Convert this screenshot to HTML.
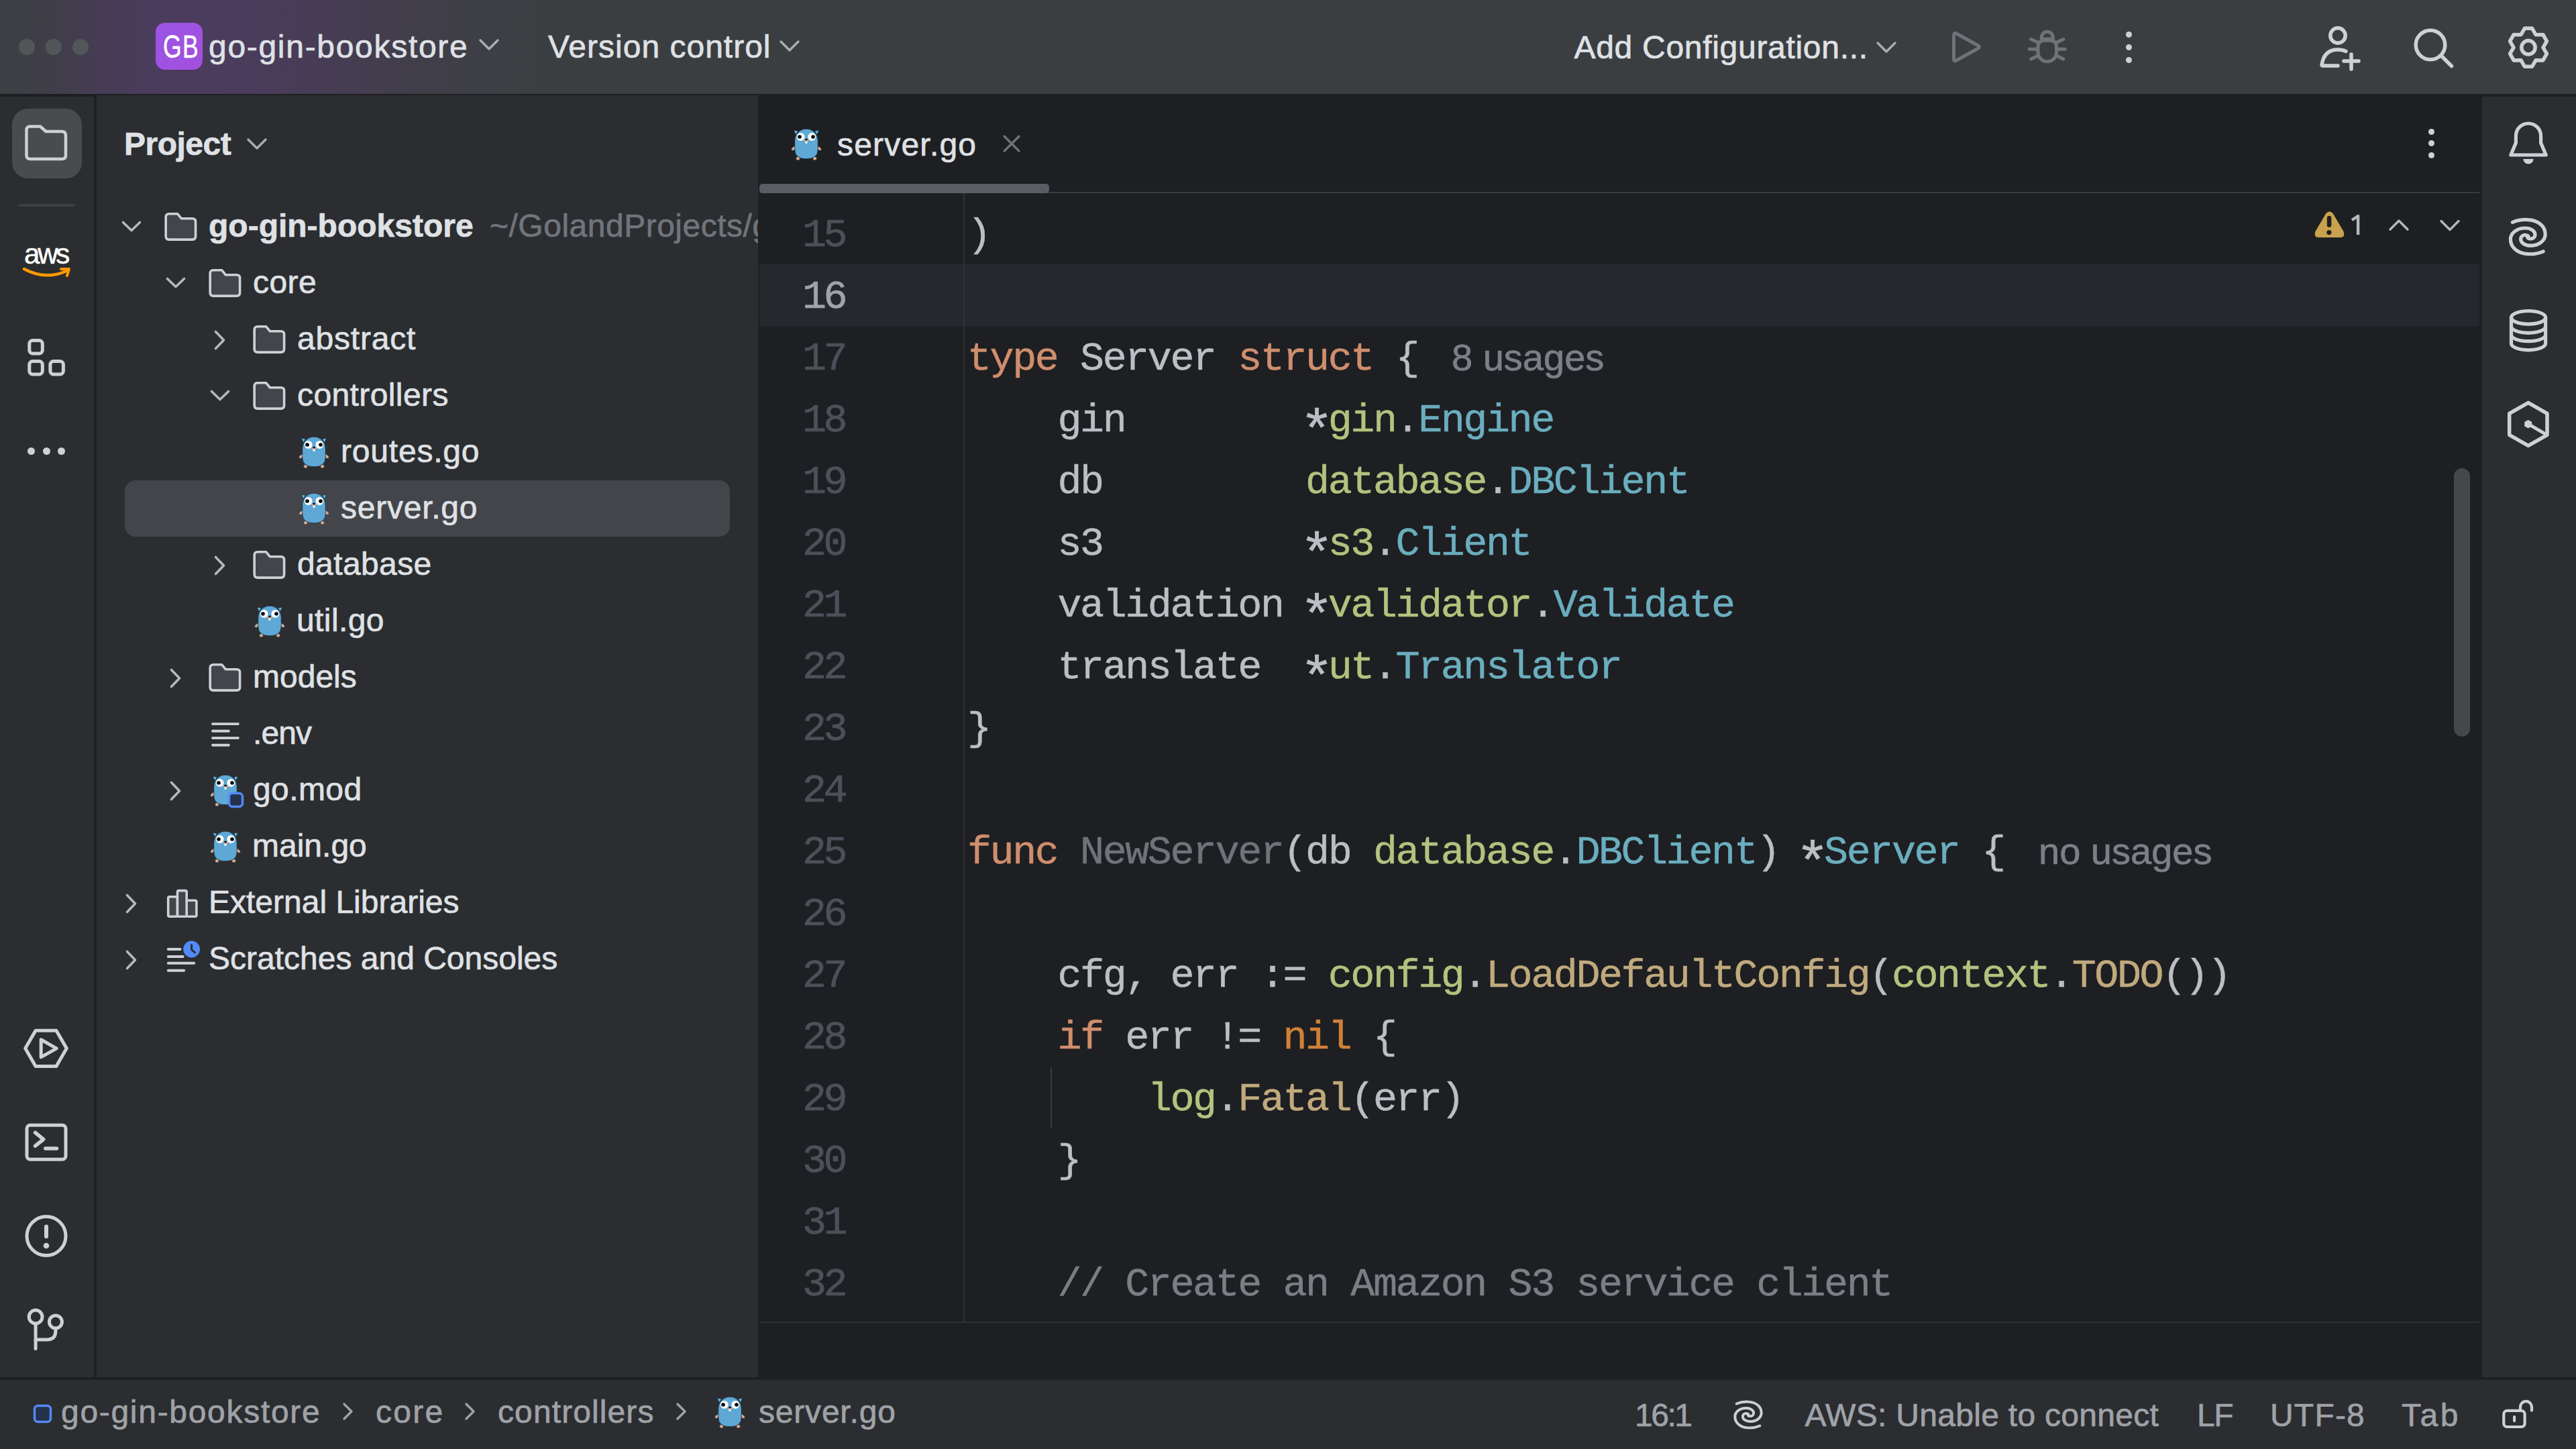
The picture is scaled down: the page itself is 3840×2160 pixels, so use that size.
<!DOCTYPE html>
<html><head><meta charset="utf-8"><title>GoLand</title>
<style>
html,body{margin:0;padding:0;}
body{width:3840px;height:2160px;overflow:hidden;position:relative;background:#1e1f22;font-family:"Liberation Sans",sans-serif;}
.t{position:absolute;white-space:pre;-webkit-text-stroke:0.7px currentColor;}
.ast{display:inline-block;width:33.6px;letter-spacing:0;text-align:center;transform:translate(-1.6px,19.4px) scale(1.4);}
svg{overflow:visible}
</style></head><body>
<svg width="0" height="0" style="position:absolute">
<defs>
<g id="gopher">
 <path d="M4.3 4.3 L10.5 5.2 L7.2 11 Z" fill="#6cb9e0" stroke="#1b3140" stroke-width="0.8" stroke-linejoin="round"/>
 <path d="M41.7 4.3 L35.5 5.2 L38.8 11 Z" fill="#6cb9e0" stroke="#1b3140" stroke-width="0.8" stroke-linejoin="round"/>
 <ellipse cx="4.6" cy="31" rx="4.6" ry="2.3" fill="#e0ae8c" stroke="#1b3140" stroke-width="0.6" transform="rotate(-38 4.6 31)"/>
 <ellipse cx="41.4" cy="31" rx="4.6" ry="2.3" fill="#e0ae8c" stroke="#1b3140" stroke-width="0.6" transform="rotate(38 41.4 31)"/>
 <ellipse cx="10.5" cy="46.2" rx="2.8" ry="2.6" fill="#e0ae8c" stroke="#1b3140" stroke-width="0.6"/>
 <ellipse cx="35.6" cy="46.2" rx="2.8" ry="2.6" fill="#e0ae8c" stroke="#1b3140" stroke-width="0.6"/>
 <path d="M5.8 19.4 A17.2 17.2 0 0 1 40.2 19.4 V33 Q40.2 46.8 23 46.8 Q5.8 46.8 5.8 33 Z" fill="#5fa8d6" stroke="#1b3140" stroke-width="0.8"/>
 <circle cx="14.7" cy="14" r="5.9" fill="#fff"/>
 <circle cx="31.3" cy="14" r="5.9" fill="#fff"/>
 <circle cx="13" cy="14" r="2.8" fill="#000"/>
 <circle cx="33" cy="14" r="2.8" fill="#000"/>
 <ellipse cx="23" cy="19.3" rx="3.3" ry="2.1" fill="#e0ae8c"/>
 <ellipse cx="23" cy="18.1" rx="1.8" ry="1.4" fill="#000"/>
 <rect x="21.4" y="21.1" width="3.2" height="2.6" fill="#fff"/>
</g>
<g id="folder">
 <path d="M2.2 7.5 Q2.2 2.7 7 2.7 H19.6 L25.5 9.8 H41.8 Q46.6 9.8 46.6 14.6 V36.3 Q46.6 41.1 41.8 41.1 H7 Q2.2 41.1 2.2 36.3 Z" fill="#43454a" stroke="#ced0d6" stroke-width="3.6" stroke-linejoin="round"/>
</g>
<g id="chev">
 <path d="M3.5 6.5 L16 18.5 L28.5 6.5" fill="none" stroke="#b4b8bf" stroke-width="3.6" stroke-linecap="round" stroke-linejoin="round"/>
</g>
</defs></svg>
<div style="position:absolute;left:0px;top:0px;width:3840px;height:140px;background:linear-gradient(90deg,#3d3f43 0px,#3f3e47 60px,#433d4f 120px,#483c58 180px,#4b3c5d 240px,#4b3c5d 330px,#493c59 420px,#453d51 520px,#413e4a 630px,#3d3f44 740px,#3b3e41 830px,#3b3e41 3840px);border-radius:0px;"></div>
<div style="position:absolute;left:28px;top:58px;width:24px;height:24px;background:#535659;border-radius:12px;"></div>
<div style="position:absolute;left:68px;top:58px;width:24px;height:24px;background:#535659;border-radius:12px;"></div>
<div style="position:absolute;left:108px;top:58px;width:24px;height:24px;background:#535659;border-radius:12px;"></div>
<div style="position:absolute;left:232px;top:34px;width:70px;height:70px;background:linear-gradient(135deg,#9a55e6,#a34fdc);border-radius:14px;"></div>
<div class="t" style="left:243.0px;top:21.9px;font-size:48px;line-height:96px;font-weight:400;color:#ffffff;letter-spacing:2px;font-family:'Liberation Sans';transform:scaleX(0.74);transform-origin:0 0;-webkit-text-stroke:0.6px #fff;">GB</div>
<div class="t" style="left:311.0px;top:22.4px;font-size:48px;line-height:96px;font-weight:400;color:#dfe1e5;letter-spacing:1.7px;font-family:'Liberation Sans';">go-gin-bookstore</div>
<svg style="position:absolute;left:712px;top:56px;" width="34" height="24" viewBox="0 0 34 24"><path d="M4 4 L17 17 L30 4" fill="none" stroke="#a9acb2" stroke-width="3.4" stroke-linecap="round" stroke-linejoin="round"/></svg>
<div class="t" style="left:817.0px;top:22.4px;font-size:48px;line-height:96px;font-weight:400;color:#dfe1e5;letter-spacing:1.0px;font-family:'Liberation Sans';">Version control</div>
<svg style="position:absolute;left:1160px;top:57.5px;" width="34" height="24" viewBox="0 0 34 24"><path d="M4 4 L17 17 L30 4" fill="none" stroke="#a9acb2" stroke-width="3.4" stroke-linecap="round" stroke-linejoin="round"/></svg>
<div class="t" style="left:2346.5px;top:23.4px;font-size:48px;line-height:96px;font-weight:400;color:#dfe1e5;letter-spacing:0.7px;font-family:'Liberation Sans';">Add Configuration...</div>
<svg style="position:absolute;left:2795px;top:60px;" width="34" height="24" viewBox="0 0 34 24"><path d="M4 4 L17 17 L30 4" fill="none" stroke="#a9acb2" stroke-width="3.4" stroke-linecap="round" stroke-linejoin="round"/></svg>
<svg style="position:absolute;left:2905px;top:40px;" width="54" height="58" viewBox="0 0 54 58"><path d="M7.5 12.5 Q7.5 7.8 11.5 10 L43.5 27.8 Q47.5 30 43.5 32.2 L11.5 50 Q7.5 52.2 7.5 47.5 Z" fill="none" stroke="#6f7378" stroke-width="5" stroke-linejoin="round"/></svg>
<svg style="position:absolute;left:3020px;top:40px;" width="64" height="58" viewBox="0 0 64 58"><g fill="none" stroke="#6f7378" stroke-width="5" stroke-linecap="round" stroke-linejoin="round"><path d="M23.3 18.2 V15.7 A8.5 8.5 0 0 1 40.3 15.7 V18.2 Z"/><path d="M18 30 Q18 20.2 28 20.2 H35.5 Q45.5 20.2 45.5 30 V38 A13.75 13.75 0 0 1 18 38 Z"/><path d="M7.7 18.5 L18.3 23.4 M5.3 33.2 H15.9 M7.7 47.9 L18.3 43 M55.8 18.5 L45.2 23.4 M58.2 33.2 H47.6 M55.8 47.9 L45.2 43"/></g></svg>
<div style="position:absolute;left:3169px;top:46.5px;width:9px;height:9px;background:#ced0d6;border-radius:5px;"></div>
<div style="position:absolute;left:3169px;top:66.0px;width:9px;height:9px;background:#ced0d6;border-radius:5px;"></div>
<div style="position:absolute;left:3169px;top:84.5px;width:9px;height:9px;background:#ced0d6;border-radius:5px;"></div>
<svg style="position:absolute;left:3455px;top:36px;" width="60" height="70" viewBox="0 0 60 70"><g fill="none" stroke="#ced0d6" stroke-width="5.5" stroke-linecap="round"><circle cx="30" cy="17" r="11.2"/><path d="M30 62 H7.5 Q5.5 62 6.2 59.5 Q10 38 30 38 Q37 38 42 40.5"/><path d="M50 45 V67 M39 55 H61"/></g></svg>
<svg style="position:absolute;left:3590px;top:36px;" width="72" height="72" viewBox="0 0 72 72"><g fill="none" stroke="#ced0d6" stroke-width="5.5" stroke-linecap="round"><circle cx="33" cy="31" r="21.8"/><path d="M49 47 L64.5 62.5"/></g></svg>
<svg style="position:absolute;left:3729px;top:31px;" width="80" height="80" viewBox="0 0 80 80"><g fill="none" stroke="#ced0d6" stroke-width="5.5" stroke-linejoin="round"><path d="M34.40 11.35 L45.60 11.35 L51.00 20.75 L61.84 20.72 L67.44 30.42 L62.00 39.80 L67.44 49.18 L61.84 58.88 L51.00 58.85 L45.60 68.25 L34.40 68.25 L29.00 58.85 L18.16 58.88 L12.56 49.18 L18.00 39.80 L12.56 30.42 L18.16 20.72 L29.00 20.75 Z"/><circle cx="40" cy="39.8" r="10.2"/></g></svg>
<div style="position:absolute;left:0px;top:144px;width:140px;height:1909px;background:#2b2d30;border-radius:0px;"></div>
<div style="position:absolute;left:18px;top:162px;width:104px;height:104px;background:#4a4b4e;border-radius:24px;"></div>
<svg style="position:absolute;left:34px;top:183px;" width="70" height="60" viewBox="0 0 70 60"><path d="M5.5 11 Q5.5 5.5 11 5.5 H26 L34.5 13 H58 Q64 13 64 19 V48.5 Q64 54 58.5 54 H11 Q5.5 54 5.5 48.5 Z" fill="none" stroke="#ced0d6" stroke-width="4.5" stroke-linejoin="round"/></svg>
<div style="position:absolute;left:28px;top:304px;width:84px;height:4px;background:#3e4043;border-radius:2px;"></div>
<div class="t" style="left:36.0px;top:336.9px;font-size:42px;line-height:84px;font-weight:400;color:#ffffff;letter-spacing:-3.2px;font-family:'Liberation Sans';-webkit-text-stroke:0.5px #fff;">aws</div>
<svg style="position:absolute;left:33px;top:396px;" width="76" height="22" viewBox="0 0 76 22"><path d="M3 5 Q35 22 66 8" fill="none" stroke="#ff9900" stroke-width="4.5" stroke-linecap="round"/><path d="M58 5 L70 5 L67 15" fill="none" stroke="#ff9900" stroke-width="4" stroke-linecap="round" stroke-linejoin="round"/></svg>
<svg style="position:absolute;left:38px;top:502px;" width="62" height="62" viewBox="0 0 62 62"><g fill="none" stroke="#ced0d6" stroke-width="5"><rect x="5.8" y="5.5" width="19.5" height="19.5" rx="5"/><rect x="5.8" y="36.5" width="19.5" height="19.5" rx="5"/><rect x="36.9" y="36.5" width="19.5" height="19.5" rx="5"/></g></svg>
<div style="position:absolute;left:40.5px;top:667px;width:11px;height:11px;background:#ced0d6;border-radius:6px;"></div>
<div style="position:absolute;left:63.5px;top:667px;width:11px;height:11px;background:#ced0d6;border-radius:6px;"></div>
<div style="position:absolute;left:86.1px;top:667px;width:11px;height:11px;background:#ced0d6;border-radius:6px;"></div>
<svg style="position:absolute;left:33px;top:1530px;" width="72" height="66" viewBox="0 0 72 66"><g fill="none" stroke="#ced0d6" stroke-width="5" stroke-linejoin="round"><path d="M20.1 6.2 H50.9 L66.3 32.85 L50.9 59.5 H20.1 L4.7 32.85 Z"/><path d="M28.2 19.8 L51.3 32.85 L28.2 45.9 Z"/></g></svg>
<svg style="position:absolute;left:34px;top:1673px;" width="70" height="62" viewBox="0 0 70 62"><g fill="none" stroke="#ced0d6" stroke-width="5" stroke-linecap="round" stroke-linejoin="round"><rect x="6" y="4.3" width="58" height="51" rx="5"/><path d="M18.6 15.4 L30.8 25.3 L18.6 35.2" stroke-width="5.5"/><path d="M33.8 39 H50.5" stroke-width="5.5"/></g></svg>
<svg style="position:absolute;left:34px;top:1808px;" width="70" height="70" viewBox="0 0 70 70"><g fill="none" stroke="#ced0d6" stroke-width="5" stroke-linecap="round"><circle cx="35" cy="34.5" r="29"/><path d="M35 20.6 V35.3" stroke-width="6"/></g><circle cx="35" cy="49" r="4.3" fill="#ced0d6"/></svg>
<svg style="position:absolute;left:36px;top:1948px;" width="64" height="70" viewBox="0 0 64 70"><g fill="none" stroke="#ced0d6" stroke-width="5" stroke-linecap="round"><circle cx="17.1" cy="15" r="9.9"/><circle cx="46.9" cy="22.5" r="9.5"/><path d="M17.1 24.9 V62.5"/><path d="M17.1 49 H34 Q46.9 49 46.9 36 V32"/></g></svg>
<div style="position:absolute;left:144px;top:142px;width:986px;height:1911px;background:#2b2d30;border-radius:0px;"></div>
<div class="t" style="left:185.0px;top:167.4px;font-size:48px;line-height:96px;font-weight:700;color:#dfe1e5;letter-spacing:-0.5px;font-family:'Liberation Sans';">Project</div>
<svg style="position:absolute;left:366px;top:204px;" width="36" height="24" viewBox="0 0 36 24"><path d="M4 4 L17 17 L30 4" fill="none" stroke="#a9acb2" stroke-width="3.4" stroke-linecap="round" stroke-linejoin="round"/></svg>
<div style="position:absolute;left:186px;top:716px;width:902px;height:84px;background:#43454a;border-radius:16px;"></div>
<svg style="position:absolute;left:180px;top:325px;" width="32" height="25" viewBox="0 0 32 25"><use href="#chev"/></svg>
<svg style="position:absolute;left:245px;top:316px;" width="49" height="44" viewBox="0 0 49 44"><use href="#folder"/></svg>
<div class="t" style="left:311.0px;top:289.4px;font-size:48px;line-height:96px;font-weight:700;color:#dfe1e5;letter-spacing:0px;font-family:'Liberation Sans';">go-gin-bookstore</div>
<div class="t" style="left:730.0px;top:289.4px;font-size:48px;line-height:96px;font-weight:400;color:#70747b;letter-spacing:0.5px;font-family:'Liberation Sans';">~/GolandProjects/go-gin-bookstore</div>
<svg style="position:absolute;left:246px;top:409px;" width="32" height="25" viewBox="0 0 32 25"><use href="#chev"/></svg>
<svg style="position:absolute;left:311px;top:400px;" width="49" height="44" viewBox="0 0 49 44"><use href="#folder"/></svg>
<div class="t" style="left:377.0px;top:373.4px;font-size:48px;line-height:96px;font-weight:400;color:#dfe1e5;letter-spacing:0.4px;font-family:'Liberation Sans';">core</div>
<svg style="position:absolute;left:315px;top:498px;" width="25" height="32" viewBox="0 0 25 32"><g transform="rotate(-90 12.5 12.5)"><use href="#chev"/></g></svg>
<svg style="position:absolute;left:377px;top:484px;" width="49" height="44" viewBox="0 0 49 44"><use href="#folder"/></svg>
<div class="t" style="left:443.0px;top:457.4px;font-size:48px;line-height:96px;font-weight:400;color:#dfe1e5;letter-spacing:0.8px;font-family:'Liberation Sans';">abstract</div>
<svg style="position:absolute;left:312px;top:577px;" width="32" height="25" viewBox="0 0 32 25"><use href="#chev"/></svg>
<svg style="position:absolute;left:377px;top:568px;" width="49" height="44" viewBox="0 0 49 44"><use href="#folder"/></svg>
<div class="t" style="left:443.0px;top:541.4px;font-size:48px;line-height:96px;font-weight:400;color:#dfe1e5;letter-spacing:0.4px;font-family:'Liberation Sans';">controllers</div>
<svg style="position:absolute;left:445px;top:649px;" width="47" height="51" viewBox="0 0 47 51"><g transform="scale(1.0)"><use href="#gopher"/></g></svg>
<div class="t" style="left:508.0px;top:625.4px;font-size:48px;line-height:96px;font-weight:400;color:#dfe1e5;letter-spacing:0.8px;font-family:'Liberation Sans';">routes.go</div>
<svg style="position:absolute;left:445px;top:733px;" width="47" height="51" viewBox="0 0 47 51"><g transform="scale(1.0)"><use href="#gopher"/></g></svg>
<div class="t" style="left:508.0px;top:709.4px;font-size:48px;line-height:96px;font-weight:400;color:#dfe1e5;letter-spacing:0.75px;font-family:'Liberation Sans';">server.go</div>
<svg style="position:absolute;left:315px;top:834px;" width="25" height="32" viewBox="0 0 25 32"><g transform="rotate(-90 12.5 12.5)"><use href="#chev"/></g></svg>
<svg style="position:absolute;left:377px;top:820px;" width="49" height="44" viewBox="0 0 49 44"><use href="#folder"/></svg>
<div class="t" style="left:443.0px;top:793.4px;font-size:48px;line-height:96px;font-weight:400;color:#dfe1e5;letter-spacing:0.4px;font-family:'Liberation Sans';">database</div>
<svg style="position:absolute;left:379px;top:901px;" width="47" height="51" viewBox="0 0 47 51"><g transform="scale(1.0)"><use href="#gopher"/></g></svg>
<div class="t" style="left:442.0px;top:877.4px;font-size:48px;line-height:96px;font-weight:400;color:#dfe1e5;letter-spacing:0.4px;font-family:'Liberation Sans';">util.go</div>
<svg style="position:absolute;left:249px;top:1002px;" width="25" height="32" viewBox="0 0 25 32"><g transform="rotate(-90 12.5 12.5)"><use href="#chev"/></g></svg>
<svg style="position:absolute;left:311px;top:988px;" width="49" height="44" viewBox="0 0 49 44"><use href="#folder"/></svg>
<div class="t" style="left:377.0px;top:961.4px;font-size:48px;line-height:96px;font-weight:400;color:#dfe1e5;letter-spacing:0.0px;font-family:'Liberation Sans';">models</div>
<svg style="position:absolute;left:311px;top:1072px;" width="50" height="44" viewBox="0 0 50 44"><g stroke="#ced0d6" stroke-width="3.9" stroke-linecap="round"><path d="M6 7.1 H43.9 M6 17.7 H29.9 M6 28.1 H43.9 M6 38.8 H29.9"/></g></svg>
<div class="t" style="left:377.0px;top:1045.4px;font-size:48px;line-height:96px;font-weight:400;color:#dfe1e5;letter-spacing:-0.9px;font-family:'Liberation Sans';">.env</div>
<svg style="position:absolute;left:249px;top:1170px;" width="25" height="32" viewBox="0 0 25 32"><g transform="rotate(-90 12.5 12.5)"><use href="#chev"/></g></svg>
<svg style="position:absolute;left:313px;top:1153px;" width="47" height="51" viewBox="0 0 47 51"><g transform="scale(1.0)"><use href="#gopher"/></g></svg>
<svg style="position:absolute;left:339px;top:1180px;" width="26" height="26" viewBox="0 0 26 26"><rect x="2.5" y="2.5" width="20" height="20" rx="5" fill="#25324d" stroke="#548af7" stroke-width="3.5"/></svg>
<div class="t" style="left:377.0px;top:1129.4px;font-size:48px;line-height:96px;font-weight:400;color:#dfe1e5;letter-spacing:0.4px;font-family:'Liberation Sans';">go.mod</div>
<svg style="position:absolute;left:313px;top:1237px;" width="47" height="51" viewBox="0 0 47 51"><g transform="scale(1.0)"><use href="#gopher"/></g></svg>
<div class="t" style="left:376.0px;top:1213.4px;font-size:48px;line-height:96px;font-weight:400;color:#dfe1e5;letter-spacing:0.0px;font-family:'Liberation Sans';">main.go</div>
<svg style="position:absolute;left:183px;top:1338px;" width="25" height="32" viewBox="0 0 25 32"><g transform="rotate(-90 12.5 12.5)"><use href="#chev"/></g></svg>
<svg style="position:absolute;left:245px;top:1322px;" width="50" height="48" viewBox="0 0 50 48"><g fill="#43454a" stroke="#ced0d6" stroke-width="3.6" stroke-linejoin="round"><rect x="5.7" y="14.8" width="13.8" height="29.4" rx="2"/><rect x="33.2" y="20.3" width="14.7" height="23.9" rx="2"/><rect x="19.5" y="5.6" width="13.7" height="38.6" rx="2"/></g></svg>
<div class="t" style="left:311.0px;top:1297.4px;font-size:48px;line-height:96px;font-weight:400;color:#dfe1e5;letter-spacing:0.0px;font-family:'Liberation Sans';">External Libraries</div>
<svg style="position:absolute;left:183px;top:1422px;" width="25" height="32" viewBox="0 0 25 32"><g transform="rotate(-90 12.5 12.5)"><use href="#chev"/></g></svg>
<svg style="position:absolute;left:245px;top:1404px;" width="56" height="52" viewBox="0 0 56 52"><g stroke="#ced0d6" stroke-width="3.9" stroke-linecap="round"><path d="M5.8 11 H23.6 M5.8 22 H27.7 M5.8 31.7 H44.2 M5.8 42.7 H29.2"/></g><circle cx="40.6" cy="11" r="12.4" fill="#548af7"/><path d="M40.6 4.5 V11.5 L45.5 16" fill="none" stroke="#2b2d30" stroke-width="3" stroke-linecap="round"/></svg>
<div class="t" style="left:311.0px;top:1381.4px;font-size:48px;line-height:96px;font-weight:400;color:#dfe1e5;letter-spacing:0.0px;font-family:'Liberation Sans';">Scratches and Consoles</div>
<div style="position:absolute;left:1130px;top:142px;width:2567px;height:1911px;background:#1e1f22;border-radius:0px;"></div>
<svg style="position:absolute;left:1179px;top:190px;" width="47" height="51" viewBox="0 0 47 51"><g transform="scale(1.0)"><use href="#gopher"/></g></svg>
<div class="t" style="left:1248.0px;top:167.9px;font-size:48px;line-height:96px;font-weight:400;color:#dfe1e5;letter-spacing:1.2px;font-family:'Liberation Sans';">server.go</div>
<svg style="position:absolute;left:1490px;top:196px;" width="36" height="36" viewBox="0 0 36 36"><path d="M7.2 7.3 L29 29.1 M29 7.3 L7.2 29.1" stroke="#70747a" stroke-width="3.4" stroke-linecap="round"/></svg>
<div style="position:absolute;left:1132px;top:286px;width:2564px;height:2px;background:#393b40;border-radius:0px;"></div>
<div style="position:absolute;left:1132px;top:274px;width:432px;height:14px;background:#5a5d63;border-radius:5px;"></div>
<div style="position:absolute;left:3619.5px;top:191.8px;width:9px;height:9px;background:#ced0d6;border-radius:5px;"></div>
<div style="position:absolute;left:3619.5px;top:209.4px;width:9px;height:9px;background:#ced0d6;border-radius:5px;"></div>
<div style="position:absolute;left:3619.5px;top:227.0px;width:9px;height:9px;background:#ced0d6;border-radius:5px;"></div>
<div style="position:absolute;left:1132px;top:394px;width:2564px;height:92px;background:#26282e;border-radius:0px;"></div>
<div style="position:absolute;left:1436px;top:288px;width:2px;height:1683px;background:#2f3135;border-radius:0px;"></div>
<div style="position:absolute;left:1132px;top:1970px;width:2564px;height:2px;background:#2e3034;border-radius:0px;"></div>
<svg style="position:absolute;left:3448px;top:312px;" width="50" height="46" viewBox="0 0 50 46"><path d="M24.5 3.5 Q28 3.5 30.5 7.5 L45.5 33 Q48.5 42 40 42 H9 Q0.5 42 3.5 33 L18.5 7.5 Q21 3.5 24.5 3.5 Z" fill="#c9a24d"/><path d="M24.1 13 V23.6" stroke="#1e1f22" stroke-width="6.5" stroke-linecap="round"/><circle cx="23.9" cy="34.5" r="3.6" fill="#1e1f22"/></svg>
<svg style="position:absolute;left:3500px;top:318px;" width="24" height="36" viewBox="0 0 24 36"><path d="M6 10 L15.1 4 V32" fill="none" stroke="#b4b8bf" stroke-width="4.4" stroke-linejoin="round"/></svg>
<svg style="position:absolute;left:3558px;top:322px;" width="36" height="28" viewBox="0 0 36 28"><path d="M5 20 L18 7 L31 20" fill="none" stroke="#b4b8bf" stroke-width="3.4" stroke-linecap="round" stroke-linejoin="round"/></svg>
<svg style="position:absolute;left:3634px;top:322px;" width="36" height="28" viewBox="0 0 36 28"><path d="M5 7.5 L18 20.5 L31 7.5" fill="none" stroke="#b4b8bf" stroke-width="3.4" stroke-linecap="round" stroke-linejoin="round"/></svg>
<div style="position:absolute;left:3658px;top:698px;width:24px;height:400px;background:#46474a;border-radius:12px;"></div>
<div class="t" style="left:1196.0px;top:291.0px;font-size:60px;line-height:120px;font-weight:400;color:#4b5059;letter-spacing:-4.6px;font-family:'Liberation Mono';">15</div>
<div class="t" style="left:1442px;top:305.0px;font-family:'Liberation Mono';font-size:60px;line-height:92px;letter-spacing:-2.40px;color:#bcbec4;-webkit-text-stroke:0.5px currentColor"><span style="color:#bcbec4">)</span></div>
<div class="t" style="left:1196.0px;top:383.0px;font-size:60px;line-height:120px;font-weight:400;color:#a1a3ab;letter-spacing:-4.6px;font-family:'Liberation Mono';">16</div>
<div class="t" style="left:1196.0px;top:475.0px;font-size:60px;line-height:120px;font-weight:400;color:#4b5059;letter-spacing:-4.6px;font-family:'Liberation Mono';">17</div>
<div class="t" style="left:1442px;top:489.0px;font-family:'Liberation Mono';font-size:60px;line-height:92px;letter-spacing:-2.40px;color:#bcbec4;-webkit-text-stroke:0.5px currentColor"><span style="color:#cf8e6d">type</span><span style="color:#bcbec4"> Server </span><span style="color:#cf8e6d">struct</span><span style="color:#bcbec4"> {</span></div>
<div class="t" style="left:1196.0px;top:567.0px;font-size:60px;line-height:120px;font-weight:400;color:#4b5059;letter-spacing:-4.6px;font-family:'Liberation Mono';">18</div>
<div class="t" style="left:1442px;top:581.0px;font-family:'Liberation Mono';font-size:60px;line-height:92px;letter-spacing:-2.40px;color:#bcbec4;-webkit-text-stroke:0.5px currentColor"><span style="color:#bcbec4">    gin        <span class="ast">*</span></span><span style="color:#b3c27e">gin</span><span style="color:#bcbec4">.</span><span style="color:#6aaebf">Engine</span></div>
<div class="t" style="left:1196.0px;top:659.0px;font-size:60px;line-height:120px;font-weight:400;color:#4b5059;letter-spacing:-4.6px;font-family:'Liberation Mono';">19</div>
<div class="t" style="left:1442px;top:673.0px;font-family:'Liberation Mono';font-size:60px;line-height:92px;letter-spacing:-2.40px;color:#bcbec4;-webkit-text-stroke:0.5px currentColor"><span style="color:#bcbec4">    db         </span><span style="color:#b3c27e">database</span><span style="color:#bcbec4">.</span><span style="color:#6aaebf">DBClient</span></div>
<div class="t" style="left:1196.0px;top:751.0px;font-size:60px;line-height:120px;font-weight:400;color:#4b5059;letter-spacing:-4.6px;font-family:'Liberation Mono';">20</div>
<div class="t" style="left:1442px;top:765.0px;font-family:'Liberation Mono';font-size:60px;line-height:92px;letter-spacing:-2.40px;color:#bcbec4;-webkit-text-stroke:0.5px currentColor"><span style="color:#bcbec4">    s3         <span class="ast">*</span></span><span style="color:#b3c27e">s3</span><span style="color:#bcbec4">.</span><span style="color:#6aaebf">Client</span></div>
<div class="t" style="left:1196.0px;top:843.0px;font-size:60px;line-height:120px;font-weight:400;color:#4b5059;letter-spacing:-4.6px;font-family:'Liberation Mono';">21</div>
<div class="t" style="left:1442px;top:857.0px;font-family:'Liberation Mono';font-size:60px;line-height:92px;letter-spacing:-2.40px;color:#bcbec4;-webkit-text-stroke:0.5px currentColor"><span style="color:#bcbec4">    validation <span class="ast">*</span></span><span style="color:#b3c27e">validator</span><span style="color:#bcbec4">.</span><span style="color:#6aaebf">Validate</span></div>
<div class="t" style="left:1196.0px;top:935.0px;font-size:60px;line-height:120px;font-weight:400;color:#4b5059;letter-spacing:-4.6px;font-family:'Liberation Mono';">22</div>
<div class="t" style="left:1442px;top:949.0px;font-family:'Liberation Mono';font-size:60px;line-height:92px;letter-spacing:-2.40px;color:#bcbec4;-webkit-text-stroke:0.5px currentColor"><span style="color:#bcbec4">    translate  <span class="ast">*</span></span><span style="color:#b3c27e">ut</span><span style="color:#bcbec4">.</span><span style="color:#6aaebf">Translator</span></div>
<div class="t" style="left:1196.0px;top:1027.0px;font-size:60px;line-height:120px;font-weight:400;color:#4b5059;letter-spacing:-4.6px;font-family:'Liberation Mono';">23</div>
<div class="t" style="left:1442px;top:1041.0px;font-family:'Liberation Mono';font-size:60px;line-height:92px;letter-spacing:-2.40px;color:#bcbec4;-webkit-text-stroke:0.5px currentColor"><span style="color:#bcbec4">}</span></div>
<div class="t" style="left:1196.0px;top:1119.0px;font-size:60px;line-height:120px;font-weight:400;color:#4b5059;letter-spacing:-4.6px;font-family:'Liberation Mono';">24</div>
<div class="t" style="left:1196.0px;top:1211.0px;font-size:60px;line-height:120px;font-weight:400;color:#4b5059;letter-spacing:-4.6px;font-family:'Liberation Mono';">25</div>
<div class="t" style="left:1442px;top:1225.0px;font-family:'Liberation Mono';font-size:60px;line-height:92px;letter-spacing:-2.40px;color:#bcbec4;-webkit-text-stroke:0.5px currentColor"><span style="color:#cf8e6d">func</span><span style="color:#bcbec4"> </span><span style="color:#6f737a">NewServer</span><span style="color:#bcbec4">(db </span><span style="color:#b3c27e">database</span><span style="color:#bcbec4">.</span><span style="color:#6aaebf">DBClient</span><span style="color:#bcbec4">) <span class="ast">*</span></span><span style="color:#6aaebf">Server</span><span style="color:#bcbec4"> {</span></div>
<div class="t" style="left:1196.0px;top:1303.0px;font-size:60px;line-height:120px;font-weight:400;color:#4b5059;letter-spacing:-4.6px;font-family:'Liberation Mono';">26</div>
<div class="t" style="left:1196.0px;top:1395.0px;font-size:60px;line-height:120px;font-weight:400;color:#4b5059;letter-spacing:-4.6px;font-family:'Liberation Mono';">27</div>
<div class="t" style="left:1442px;top:1409.0px;font-family:'Liberation Mono';font-size:60px;line-height:92px;letter-spacing:-2.40px;color:#bcbec4;-webkit-text-stroke:0.5px currentColor"><span style="color:#bcbec4">    cfg, err := </span><span style="color:#b3c27e">config</span><span style="color:#bcbec4">.</span><span style="color:#c0aa7d">LoadDefaultConfig</span><span style="color:#bcbec4">(</span><span style="color:#b3c27e">context</span><span style="color:#bcbec4">.</span><span style="color:#c0aa7d">TODO</span><span style="color:#bcbec4">())</span></div>
<div class="t" style="left:1196.0px;top:1487.0px;font-size:60px;line-height:120px;font-weight:400;color:#4b5059;letter-spacing:-4.6px;font-family:'Liberation Mono';">28</div>
<div class="t" style="left:1442px;top:1501.0px;font-family:'Liberation Mono';font-size:60px;line-height:92px;letter-spacing:-2.40px;color:#bcbec4;-webkit-text-stroke:0.5px currentColor"><span style="color:#bcbec4">    </span><span style="color:#cf8e6d">if</span><span style="color:#bcbec4"> err != </span><span style="color:#cf8138">nil</span><span style="color:#bcbec4"> {</span></div>
<div class="t" style="left:1196.0px;top:1579.0px;font-size:60px;line-height:120px;font-weight:400;color:#4b5059;letter-spacing:-4.6px;font-family:'Liberation Mono';">29</div>
<div class="t" style="left:1442px;top:1593.0px;font-family:'Liberation Mono';font-size:60px;line-height:92px;letter-spacing:-2.40px;color:#bcbec4;-webkit-text-stroke:0.5px currentColor"><span style="color:#bcbec4">        </span><span style="color:#b3c27e">log</span><span style="color:#bcbec4">.</span><span style="color:#c0aa7d">Fatal</span><span style="color:#bcbec4">(err)</span></div>
<div class="t" style="left:1196.0px;top:1671.0px;font-size:60px;line-height:120px;font-weight:400;color:#4b5059;letter-spacing:-4.6px;font-family:'Liberation Mono';">30</div>
<div class="t" style="left:1442px;top:1685.0px;font-family:'Liberation Mono';font-size:60px;line-height:92px;letter-spacing:-2.40px;color:#bcbec4;-webkit-text-stroke:0.5px currentColor"><span style="color:#bcbec4">    }</span></div>
<div class="t" style="left:1196.0px;top:1763.0px;font-size:60px;line-height:120px;font-weight:400;color:#4b5059;letter-spacing:-4.6px;font-family:'Liberation Mono';">31</div>
<div class="t" style="left:1196.0px;top:1855.0px;font-size:60px;line-height:120px;font-weight:400;color:#4b5059;letter-spacing:-4.6px;font-family:'Liberation Mono';">32</div>
<div class="t" style="left:1442px;top:1869.0px;font-family:'Liberation Mono';font-size:60px;line-height:92px;letter-spacing:-2.40px;color:#bcbec4;-webkit-text-stroke:0.5px currentColor"><span style="color:#bcbec4">    </span><span style="color:#7a7e85">// Create an Amazon S3 service client</span></div>
<div class="t" style="left:2164.0px;top:476.6px;font-size:56px;line-height:112px;font-weight:400;color:#7b7f87;letter-spacing:0px;font-family:'Liberation Sans';">8 usages</div>
<div class="t" style="left:3039.0px;top:1213.1px;font-size:56px;line-height:112px;font-weight:400;color:#7b7f87;letter-spacing:0px;font-family:'Liberation Sans';">no usages</div>
<div style="position:absolute;left:1566px;top:1591px;width:2px;height:90px;background:#393b40;border-radius:0px;"></div>
<div style="position:absolute;left:3700px;top:144px;width:140px;height:1909px;background:#2b2d30;border-radius:0px;"></div>
<svg style="position:absolute;left:3736px;top:176px;" width="66" height="76" viewBox="0 0 66 76"><path d="M14.4 37 V26.6 A18.6 18.6 0 0 1 51.6 26.6 V37 L59.2 55 H6.8 Z" fill="none" stroke="#ced0d6" stroke-width="5.2" stroke-linejoin="round"/><path d="M25.4 61 H40.6 A7.6 7.6 0 0 1 25.4 61 Z" fill="#ced0d6"/></svg>
<svg style="position:absolute;left:3728px;top:313px;" width="80" height="80" viewBox="0 0 80 80"><g transform="translate(40.3 40.1)" fill="none" stroke="#ced0d6" stroke-width="5.2" stroke-linecap="round"><path d="M-22.8 -21.7 C-15 -25 -7 -26 0 -25.5 C15 -25 26 -16 25.9 -3.5 C25.8 6 16 13 4.1 13.1 C-4 13.2 -10.7 9 -10.7 3.5 C-10.7 -1 -7 -3 -4.1 -2.8 C-1.5 -2.6 0.5 -1.5 0.7 -0.7"/><path transform="rotate(180)" d="M-22.8 -21.7 C-15 -25 -7 -26 0 -25.5 C15 -25 26 -16 25.9 -3.5 C25.8 6 16 13 4.1 13.1 C-4 13.2 -10.7 9 -10.7 3.5 C-10.7 -1 -7 -3 -4.1 -2.8 C-1.5 -2.6 0.5 -1.5 0.7 -0.7"/></g></svg>
<svg style="position:absolute;left:3736px;top:459px;" width="66" height="74" viewBox="0 0 66 74"><g fill="none" stroke="#ced0d6" stroke-width="5.2"><ellipse cx="33.05" cy="14.3" rx="25.55" ry="9.8"/><path d="M7.5 14.3 V53 A25.55 9.8 0 0 0 58.6 53 V14.3"/><path d="M7.5 27.5 A25.55 9.8 0 0 0 58.6 27.5"/><path d="M7.5 39.9 A25.55 9.8 0 0 0 58.6 39.9"/></g></svg>
<svg style="position:absolute;left:3733px;top:594px;" width="72" height="76" viewBox="0 0 72 76"><g fill="none" stroke="#cfd0d2" stroke-width="5.5" stroke-linejoin="round"><path d="M35.85 6.4 L64 22.4 V54.3 L35.85 70.3 L7.7 54.3 V22.4 Z"/><path d="M36 38.2 L59.5 51.9" stroke-linecap="round" stroke-width="5"/></g><path d="M35.7 32 L41.2 35.1 V41.3 L35.7 44.4 L30.2 41.3 V35.1 Z" fill="#cfd0d2"/></svg>
<div style="position:absolute;left:0px;top:2057px;width:3840px;height:103px;background:#2b2d30;border-radius:0px;"></div>
<svg style="position:absolute;left:48px;top:2092px;" width="32" height="32" viewBox="0 0 32 32"><rect x="3.5" y="3.5" width="24" height="24" rx="5" fill="#25324d" stroke="#548af7" stroke-width="3.5"/></svg>
<div class="t" style="left:91.0px;top:2056.9px;font-size:48px;line-height:96px;font-weight:400;color:#9fa2a8;letter-spacing:1.7px;font-family:'Liberation Sans';">go-gin-bookstore</div>
<svg style="position:absolute;left:508px;top:2089px;" width="22" height="30" viewBox="0 0 22 30"><path d="M5 4 L16 15 L5 26" fill="none" stroke="#9fa2a8" stroke-width="3.4" stroke-linecap="round" stroke-linejoin="round"/></svg>
<div class="t" style="left:560.0px;top:2056.9px;font-size:48px;line-height:96px;font-weight:400;color:#9fa2a8;letter-spacing:2.3px;font-family:'Liberation Sans';">core</div>
<svg style="position:absolute;left:690px;top:2089px;" width="22" height="30" viewBox="0 0 22 30"><path d="M5 4 L16 15 L5 26" fill="none" stroke="#9fa2a8" stroke-width="3.4" stroke-linecap="round" stroke-linejoin="round"/></svg>
<div class="t" style="left:742.0px;top:2056.9px;font-size:48px;line-height:96px;font-weight:400;color:#9fa2a8;letter-spacing:1.1px;font-family:'Liberation Sans';">controllers</div>
<svg style="position:absolute;left:1005px;top:2089px;" width="22" height="30" viewBox="0 0 22 30"><path d="M5 4 L16 15 L5 26" fill="none" stroke="#9fa2a8" stroke-width="3.4" stroke-linecap="round" stroke-linejoin="round"/></svg>
<svg style="position:absolute;left:1065px;top:2080px;" width="47" height="51" viewBox="0 0 47 51"><g transform="scale(1.0)"><use href="#gopher"/></g></svg>
<div class="t" style="left:1131.0px;top:2056.9px;font-size:48px;line-height:96px;font-weight:400;color:#9fa2a8;letter-spacing:0.8px;font-family:'Liberation Sans';">server.go</div>
<div class="t" style="left:2437.0px;top:2061.9px;font-size:48px;line-height:96px;font-weight:400;color:#9fa2a8;letter-spacing:-2.5px;font-family:'Liberation Sans';">16:1</div>
<svg style="position:absolute;left:2576px;top:2078.5px;" width="60" height="60" viewBox="0 0 60 60"><g transform="translate(30 30) scale(0.76)" fill="none" stroke="#ced0d6" stroke-width="5.2" stroke-linecap="round"><path d="M-22.8 -21.7 C-15 -25 -7 -26 0 -25.5 C15 -25 26 -16 25.9 -3.5 C25.8 6 16 13 4.1 13.1 C-4 13.2 -10.7 9 -10.7 3.5 C-10.7 -1 -7 -3 -4.1 -2.8 C-1.5 -2.6 0.5 -1.5 0.7 -0.7"/><path transform="rotate(180)" d="M-22.8 -21.7 C-15 -25 -7 -26 0 -25.5 C15 -25 26 -16 25.9 -3.5 C25.8 6 16 13 4.1 13.1 C-4 13.2 -10.7 9 -10.7 3.5 C-10.7 -1 -7 -3 -4.1 -2.8 C-1.5 -2.6 0.5 -1.5 0.7 -0.7"/></g></svg>
<div class="t" style="left:2690.5px;top:2061.9px;font-size:48px;line-height:96px;font-weight:400;color:#9fa2a8;letter-spacing:0.3px;font-family:'Liberation Sans';">AWS: Unable to connect</div>
<div class="t" style="left:3275.0px;top:2061.9px;font-size:48px;line-height:96px;font-weight:400;color:#9fa2a8;letter-spacing:-1.5px;font-family:'Liberation Sans';">LF</div>
<div class="t" style="left:3384.0px;top:2061.9px;font-size:48px;line-height:96px;font-weight:400;color:#9fa2a8;letter-spacing:1.2px;font-family:'Liberation Sans';">UTF-8</div>
<div class="t" style="left:3580.0px;top:2061.9px;font-size:48px;line-height:96px;font-weight:400;color:#9fa2a8;letter-spacing:3.5px;font-family:'Liberation Sans';">Tab</div>
<svg style="position:absolute;left:3726px;top:2084px;" width="54" height="48" viewBox="0 0 54 48"><g fill="none" stroke="#ced0d6" stroke-width="4.2" stroke-linejoin="round" stroke-linecap="round"><rect x="6.3" y="18.9" width="31.3" height="24.1" rx="5"/><path d="M31 18.9 V13.4 A8.5 8.5 0 0 1 48 13.4 V18.6"/><path d="M22.1 28.1 V34.1"/></g></svg>
</body></html>
